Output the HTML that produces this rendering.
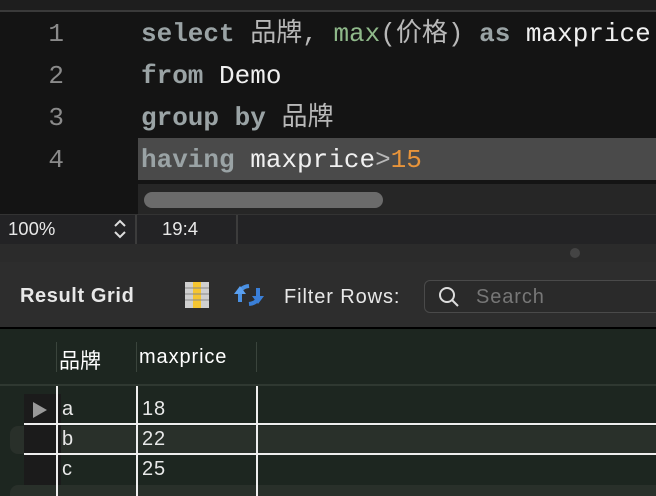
<!DOCTYPE html>
<html><head><meta charset="utf-8"><style>
*{margin:0;padding:0;box-sizing:border-box}
body{width:656px;height:496px;overflow:hidden;background:#141414;position:relative;font-family:"Liberation Sans","Noto Sans CJK SC",sans-serif}
.a{position:absolute}
.code{font-family:"Liberation Mono","Noto Sans CJK SC",monospace;font-size:26px;white-space:pre;line-height:42px}
.ln{color:#8a8a8a;width:64px;text-align:right;left:0}
.k{color:#9aa3a5;font-weight:bold}
.w{color:#f0f0f0}
.g{color:#8fb98a}
.o{color:#e8943a}
.c{color:#b8b8b8}
.t{color:#e8e8e8;font-size:20px;letter-spacing:0.9px}
</style></head><body>
<div class="a" style="left:0;top:0;width:656px;height:11px;background:#1e1e1e"></div>
<div class="a" style="left:0;top:10px;width:656px;height:2px;background:#3a3a3a"></div>
<div class="a" style="left:138px;top:138px;width:518px;height:42px;background:#4a4a4a"></div>
<div class="a code ln" style="top:13px">1</div>
<div class="a code ln" style="top:55px">2</div>
<div class="a code ln" style="top:97px">3</div>
<div class="a code ln" style="top:139px">4</div>
<div class="a code" style="left:141px;top:13px"><span class="k">select</span> <span class="c">品牌,</span> <span class="g">max</span><span class="c">(价格)</span> <span class="k">as</span> <span class="w">maxprice</span></div>
<div class="a code" style="left:141px;top:55px"><span class="k">from</span> <span class="w">Demo</span></div>
<div class="a code" style="left:141px;top:97px"><span class="k">group by</span> <span class="c">品牌</span></div>
<div class="a code" style="left:141px;top:139px"><span class="k">having</span> <span class="w">maxprice</span><span class="c">&gt;</span><span class="o">15</span></div>
<div class="a" style="left:138px;top:184px;width:518px;height:30px;background:#262626"></div>
<div class="a" style="left:144px;top:192px;width:239px;height:16px;border-radius:8px;background:#6b6b6b"></div>
<div class="a" style="left:0;top:214px;width:656px;height:30px;background:#232325;border-top:1px solid #333"></div>
<div class="a" style="left:135px;top:215px;width:2px;height:29px;background:#3c3c3c"></div>
<div class="a" style="left:236px;top:215px;width:2px;height:29px;background:#3c3c3c"></div>
<div class="a" style="left:8px;top:218px;color:#e8e8e8;font-size:18.5px">100%</div>
<svg class="a" style="left:112px;top:217px" width="16" height="24" viewBox="0 0 16 24"><path d="M3 9 L8 4 L13 9 M3 15 L8 20 L13 15" stroke="#ddd" stroke-width="2" fill="none"/></svg>
<div class="a" style="left:162px;top:218px;color:#e8e8e8;font-size:18.5px">19:4</div>
<div class="a" style="left:0;top:244px;width:656px;height:18px;background:#2b2b2b"></div>
<div class="a" style="left:570px;top:248px;width:10px;height:10px;border-radius:5px;background:#444"></div>
<div class="a" style="left:0;top:262px;width:656px;height:66px;background:#2d2d2d"></div>
<div class="a t" style="left:20px;top:285px;font-weight:bold;letter-spacing:0.6px">Result Grid</div>
<svg class="a" style="left:184px;top:281px" width="26" height="28" viewBox="0 0 26 28"><rect x="1" y="1" width="24" height="26" fill="#cfcfcf"/><rect x="9" y="1" width="8" height="26" fill="#f5c531"/><g stroke="#888" stroke-width="1"><line x1="1" y1="7" x2="25" y2="7"/><line x1="1" y1="13" x2="25" y2="13"/><line x1="1" y1="19" x2="25" y2="19"/></g></svg>
<svg class="a" style="left:232px;top:280px" width="34" height="30" viewBox="0 0 34 30"><path d="M8 22 L8 14 Q8 7 17 6" stroke="#4a90e2" stroke-width="4" fill="none"/><path d="M2 14 L8 6 L14 14Z" fill="#5aa0f0"/><path d="M26 8 L26 16 Q26 23 17 24" stroke="#3a7fd8" stroke-width="4" fill="none"/><path d="M20 16 L26 24 L32 16Z" fill="#3a7fd8"/></svg>
<div class="a t" style="left:284px;top:286px">Filter Rows:</div>
<div class="a" style="left:424px;top:280px;width:240px;height:33px;border:1px solid #4a4a4a;border-radius:6px;background:#2a2a2a"></div>
<svg class="a" style="left:438px;top:286px" width="22" height="22" viewBox="0 0 22 22"><circle cx="9" cy="9" r="7" stroke="#ddd" stroke-width="2" fill="none"/><line x1="14" y1="14" x2="20" y2="20" stroke="#ddd" stroke-width="2"/></svg>
<div class="a t" style="left:476px;top:286px;color:#777">Search</div>
<div class="a" style="left:0;top:327px;width:656px;height:2px;background:#000"></div>
<div class="a" style="left:0;top:329px;width:656px;height:167px;background:#1d2620"></div>
<div class="a" style="left:0;top:384px;width:656px;height:2px;background:#2f3831"></div>
<div class="a" style="left:56px;top:342px;width:1px;height:30px;background:#3a443c"></div>
<div class="a" style="left:136px;top:342px;width:1px;height:30px;background:#3a443c"></div>
<div class="a" style="left:256px;top:342px;width:1px;height:30px;background:#3a443c"></div>
<div class="a t" style="left:59px;top:345px;color:#fff;letter-spacing:0;font-size:21px">品牌</div>
<div class="a t" style="left:139px;top:346px;color:#fff">maxprice</div>
<div class="a" style="left:10px;top:426px;width:646px;height:28px;background:#29302a;border-radius:8px 0 0 8px"></div>
<div class="a" style="left:10px;top:485px;width:646px;height:11px;background:#29302a;border-radius:8px 0 0 0"></div>
<div class="a" style="left:24px;top:394px;width:37px;height:91px;background:#1b1b1b"></div>
<div class="a" style="left:33px;top:402px;width:0;height:0;border-left:14px solid #999;border-top:8px solid transparent;border-bottom:8px solid transparent"></div>
<div class="a" style="left:56px;top:386px;width:2px;height:110px;background:#eee"></div>
<div class="a" style="left:136px;top:386px;width:2px;height:110px;background:#eee"></div>
<div class="a" style="left:256px;top:386px;width:2px;height:110px;background:#eee"></div>
<div class="a" style="left:24px;top:423px;width:632px;height:2px;background:#eee"></div>
<div class="a" style="left:24px;top:453px;width:632px;height:2px;background:#eee"></div>
<div class="a t" style="left:62px;top:398px">a</div>
<div class="a t" style="left:142px;top:398px">18</div>
<div class="a t" style="left:62px;top:428px">b</div>
<div class="a t" style="left:142px;top:428px">22</div>
<div class="a t" style="left:62px;top:458px">c</div>
<div class="a t" style="left:142px;top:458px">25</div>
</body></html>
